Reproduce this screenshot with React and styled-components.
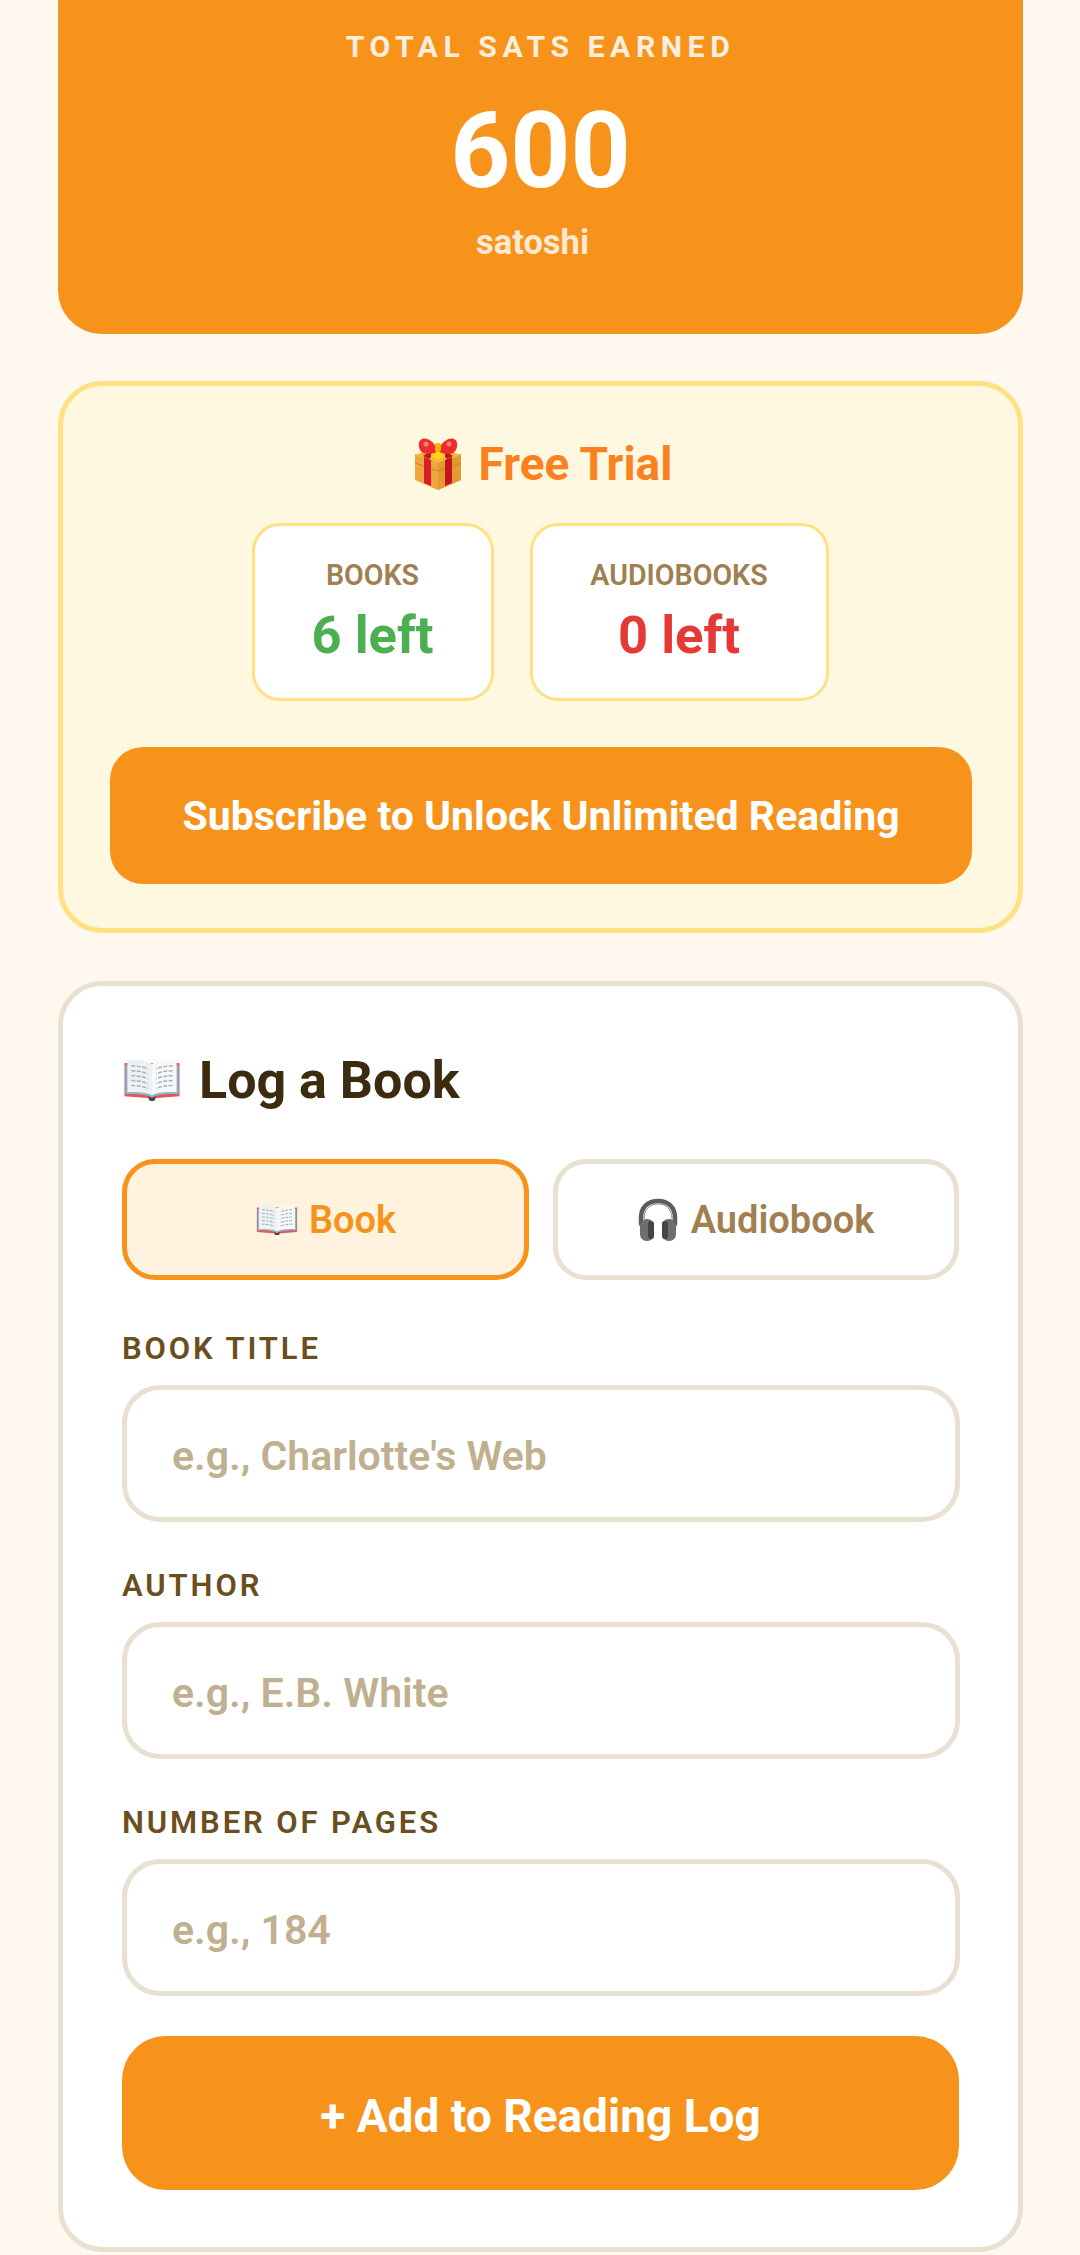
import React from "react";
import styled, { createGlobalStyle } from "styled-components";

const Global = createGlobalStyle`
  html, body { margin: 0; padding: 0; background: #fff8ef; }
  body { font-family: Roboto, "Liberation Sans", sans-serif; height: 2255px; overflow: hidden; }
  * { box-sizing: border-box; }
`;

const Page = styled.main`
  width: 1080px;
  padding: 0 57px 0 58px;
  display: flex;
  flex-direction: column;
`;

const SatsCard = styled.section`
  height: 394px;
  margin-top: -60px;
  margin-bottom: 47px;
  padding-top: 89px;
  border-radius: 44px;
  background: #f7931a;
  color: #fff;
  display: flex;
  flex-direction: column;
  align-items: center;
`;

const SatsLabel = styled.div`
  font-size: 30.25px;
  line-height: 36px;
  font-weight: 700;
  letter-spacing: 5.5px;
  opacity: 0.85;
`;

const SatsValue = styled.div`
  margin-top: 32px;
  font-size: 105px;
  line-height: 110px;
  font-weight: 700;
`;

const SatsUnit = styled.div`
  margin-top: 15px;
  margin-right: 16px;
  font-size: 34.5px;
  line-height: 40px;
  font-weight: 700;
  opacity: 0.8;
`;

const TrialCard = styled.section`
  height: 552px;
  margin-bottom: 48px;
  padding: 48px 46px 0 47px;
  border: 5px solid #ffe082;
  border-radius: 44px;
  background: #fff8e1;
  display: flex;
  flex-direction: column;
  align-items: center;
`;

const TrialTitle = styled.h2`
  margin: 0 0 0 4px;
  height: 60px;
  display: flex;
  align-items: center;
  gap: 17px;
  font-size: 46px;
  font-weight: 700;
  color: #fb8120;
`;

const Quotas = styled.div`
  margin: 29px 2px 0 0;
  display: flex;
  gap: 36px;
`;

const Quota = styled.div`
  width: ${(p) => p.$w}px;
  height: 178px;
  padding-top: 33px;
  border: 3px solid #ffe082;
  border-radius: 28px;
  background: #fff;
  text-align: center;
`;

const QuotaLabel = styled.div`
  font-size: 28.6px;
  line-height: 33px;
  font-weight: 600;
  color: #a08050;
`;

const QuotaValue = styled.div`
  margin-top: 12px;
  font-size: 52.5px;
  line-height: 62px;
  font-weight: 700;
  color: ${(p) => p.$color};
`;

const PrimaryButton = styled.button`
  display: block;
  width: 100%;
  height: ${(p) => p.$h}px;
  margin-top: ${(p) => p.$mt}px;
  padding: ${(p) => p.$pt}px 0 0;
  border: 0;
  border-radius: ${(p) => p.$r}px;
  background: #f7931a;
  color: #fff;
  font-family: inherit;
  font-size: ${(p) => p.$size}px;
  font-weight: 700;
`;

const LogCard = styled.section`
  height: 1271px;
  padding: 63px 59px 0 59px;
  border: 5px solid #e8e0d0;
  border-radius: 44px;
  background: #fff;
`;

const LogTitle = styled.h2`
  margin: 0;
  height: 62px;
  display: flex;
  align-items: center;
  gap: 17px;
  font-size: 52px;
  font-weight: 700;
  color: #3d2b0f;
`;

const Tabs = styled.div`
  margin-top: 48px;
  display: grid;
  grid-template-columns: 407px 406px;
  gap: 24px;
`;

const Tab = styled.button`
  height: 121px;
  padding: 0;
  border: 5.5px solid ${(p) => (p.$active ? "#f7931a" : "#e8e0d0")};
  border-radius: 33px;
  background: ${(p) => (p.$active ? "#fff3e0" : "#fff")};
  color: ${(p) => (p.$active ? "#f7931a" : "#a08050")};
  font-family: inherit;
  font-size: 38px;
  font-weight: 600;
  display: flex;
  align-items: center;
  justify-content: center;
  gap: ${(p) => (p.$active ? 10 : 13)}px;
`;

const Form = styled.form`
  margin-top: 51px;
  display: flex;
  flex-direction: column;
  gap: 46px;
`;

const Field = styled.label`
  display: block;
`;

const FieldLabel = styled.span`
  display: block;
  height: 36px;
  margin-bottom: 18px;
  font-size: 31px;
  line-height: 36px;
  font-weight: 600;
  letter-spacing: 2.9px;
  color: #6b4e1e;
`;

const TextInput = styled.input`
  display: block;
  width: 838px;
  height: 137px;
  padding: 4px 45px 0;
  border: 5.5px solid #e8e0d0;
  border-radius: 38px;
  background: #fff;
  font-family: inherit;
  font-size: 41px;
  font-weight: 600;
  outline: none;
  &::placeholder { color: #c0b090; opacity: 1; }
`;

const BookIcon = ({ size }) => (
  <svg width={size} height={size * 0.72} viewBox="0 0 60 44" aria-hidden="true">
    <path d="M2 5v34l26 2 2 3 2-3 26-2V5z" fill="#ef5350" />
    <path d="M3 7v30c10-1 20 0 27 3 7-3 17-4 27-3V7z" fill="#7cbcd6" />
    <path d="M5 2v33c10-1 19 0 25 3V6C24 2 15 1 5 2z" fill="#eef1f3" />
    <path d="M55 2v33c-10-1-19 0-25 3V6c6-4 15-5 25-4z" fill="#f6f8f9" />
    <g stroke="#a9b0b5" strokeWidth="1.5" strokeDasharray="4 1.5">
      <path d="M9 8c6 0 12 1 17 3M9 13c6 0 12 1 17 3M9 18c6 0 12 1 17 3M9 23c6 0 12 1 17 3M9 28c6 0 12 1 17 3" fill="none" />
      <path d="M51 8c-6 0-12 1-17 3M51 13c-6 0-12 1-17 3M51 18c-6 0-12 1-17 3M51 23c-6 0-12 1-17 3M51 28c-6 0-12 1-17 3" fill="none" />
    </g>
    <path d="M26 39l4 2 4-2-1 4-3 1-3-1z" fill="#37474f" />
  </svg>
);

const GiftIcon = () => (
  <svg width="48" height="52" viewBox="0 0 48 52" aria-hidden="true">
    <path d="M1 16l23 8 23-8v26L24 52 1 42z" fill="#efa63c" />
    <path d="M24 24l23-8v26L24 52z" fill="#e59a2f" />
    <path d="M1 17l23-8 23 8-23 8z" fill="#f6b63f" />
    <path d="M1 25l23 8 23-8" fill="none" stroke="#c9842a" strokeWidth="1" />
    <path d="M10 19l7 3v26l-7-3z" fill="#d81f26" />
    <path d="M31 22l7-3v26l-7 3z" fill="#c3151f" />
    <path d="M15 17l9-4 9 4-9 5z" fill="#ffd21a" />
    <path d="M9 18l8-5 0 6-2 2zM39 18l-8-5 0 6 2 2z" fill="#b71c1c" />
    <path d="M24 13C21 4 13-1 8 1 3 3 4 12 9 15c5 2 11 1 15-2z" fill="#ef2b2b" />
    <path d="M24 13c3-9 11-14 16-12 5 2 4 11-1 14-5 2-11 1-15-2z" fill="#ef2b2b" />
    <circle cx="12" cy="6" r="2.5" fill="#ff8080" />
    <circle cx="35" cy="6" r="2.5" fill="#ff8080" />
    <rect x="21" y="5" width="6" height="9" rx="2" fill="#f4b400" />
  </svg>
);

const HeadphonesIcon = () => (
  <svg width="40" height="44" viewBox="0 0 40 44" aria-hidden="true">
    <path d="M3 26V20C3 9 10 3 20 3s17 6 17 17v6" fill="none" stroke="#5c5c5c" strokeWidth="4.5" strokeLinecap="round" />
    <path d="M6 21c0-10 6-15 14-15s14 5 14 15" fill="none" stroke="#8a8a8a" strokeWidth="1" />
    <rect x="2" y="21" width="14" height="22" rx="6.5" fill="#6e6e6e" />
    <rect x="24" y="21" width="14" height="22" rx="6.5" fill="#6e6e6e" />
    <rect x="10" y="23" width="6" height="18" rx="3" fill="#454545" />
    <rect x="24" y="23" width="6" height="18" rx="3" fill="#454545" />
  </svg>
);

const fields = [
  ["Book title", "e.g., Charlotte's Web"],
  ["Author", "e.g., E.B. White"],
  ["Number of pages", "e.g., 184"],
];

export default function App() {
  return (
    <>
      <Global />
      <Page>
        <SatsCard>
          <SatsLabel>TOTAL SATS EARNED</SatsLabel>
          <SatsValue>600</SatsValue>
          <SatsUnit>satoshi</SatsUnit>
        </SatsCard>

        <TrialCard>
          <TrialTitle>
            <GiftIcon />
            Free Trial
          </TrialTitle>
          <Quotas>
            <Quota $w={242}>
              <QuotaLabel>BOOKS</QuotaLabel>
              <QuotaValue $color="#4caf50">6 left</QuotaValue>
            </Quota>
            <Quota $w={299}>
              <QuotaLabel>AUDIOBOOKS</QuotaLabel>
              <QuotaValue $color="#e53935">0 left</QuotaValue>
            </Quota>
          </Quotas>
          <PrimaryButton type="button" $h={137} $mt={46} $pt={0} $r={33} $size={41}>
            Subscribe to Unlock Unlimited Reading
          </PrimaryButton>
        </TrialCard>

        <LogCard>
          <LogTitle>
            <BookIcon size={60} />
            Log a Book
          </LogTitle>
          <Tabs>
            <Tab type="button" $active>
              <BookIcon size={44} />
              Book
            </Tab>
            <Tab type="button">
              <HeadphonesIcon />
              Audiobook
            </Tab>
          </Tabs>
          <Form>
            {fields.map(([label, placeholder]) => (
              <Field key={label}>
                <FieldLabel>{label.toUpperCase()}</FieldLabel>
                <TextInput placeholder={placeholder} />
              </Field>
            ))}
          </Form>
          <PrimaryButton type="button" $h={154} $mt={40} $pt={5} $r={44} $size={46}>
            + Add to Reading Log
          </PrimaryButton>
        </LogCard>
      </Page>
    </>
  );
}
